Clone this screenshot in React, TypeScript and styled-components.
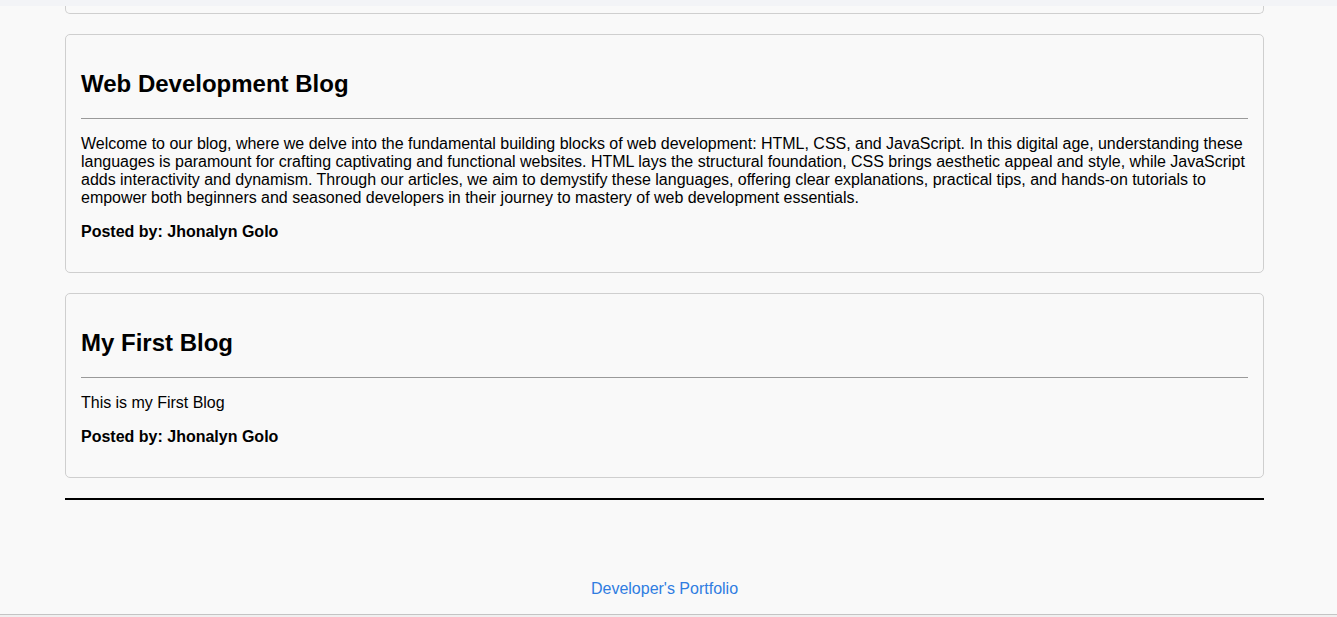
import React from "react";
import styled, { createGlobalStyle } from "styled-components";

const GlobalStyle = createGlobalStyle`
  html, body {
    margin: 0;
    padding: 0;
    background: #f9f9f9;
    font-family: "Liberation Sans", Arial, sans-serif;
    color: #000;
  }
`;

const TopBar = styled.div`
  height: 6px;
  background: #f3f4f7;
`;

const Page = styled.main`
  padding: 0 73px 0 65px;
  display: flow-root;
`;

const CardTail = styled.div`
  height: 7px;
  border: 1px solid #cfcfcf;
  border-top: none;
  border-radius: 0 0 5px 5px;
  margin-bottom: 20px;
`;

const Card = styled.article`
  border: 1px solid #cfcfcf;
  border-radius: 5px;
  padding: 15px;
  margin-bottom: 20px;
  display: flow-root;
`;

const Title = styled.h2`
  font-size: 24px;
  font-weight: bold;
  margin: 19.92px 0;
`;

const Rule = styled.hr`
  border: none;
  border-top: 1px solid #9a9a9a;
  margin: 8px 0;
`;

const Text = styled.p`
  font-size: 16px;
  margin: 16px -3px 16px 0;
  letter-spacing: -0.02px;
`;

const Author = styled.p`
  font-size: 16px;
  font-weight: bold;
  margin: 16px 0;
`;

const Divider = styled.hr`
  border: none;
  border-top: 2px solid #000;
  margin: 0;
`;

const Footer = styled.footer`
  padding: 80px 0 16px;
  text-align: center;
`;

const FooterLink = styled.a`
  color: #2f7de1;
  text-decoration: none;
  font-size: 16px;
`;

const BottomEdge = styled.div`
  border-top: 1px solid #c4c4c4;
  height: 2px;
  background: #f0f0f0;
`;

const posts = [
  {
    title: "Web Development Blog",
    body:
      "Welcome to our blog, where we delve into the fundamental building blocks of web development: HTML, CSS, and JavaScript. In this digital age, understanding these languages is paramount for crafting captivating and functional websites. HTML lays the structural foundation, CSS brings aesthetic appeal and style, while JavaScript adds interactivity and dynamism. Through our articles, we aim to demystify these languages, offering clear explanations, practical tips, and hands-on tutorials to empower both beginners and seasoned developers in their journey to mastery of web development essentials.",
    author: "Jhonalyn Golo",
  },
  {
    title: "My First Blog",
    body: "This is my First Blog",
    author: "Jhonalyn Golo",
  },
];

export default function App() {
  return (
    <>
      <GlobalStyle />
      <TopBar />
      <Page>
        <CardTail />
        {posts.map((p) => (
          <Card key={p.title}>
            <Title>{p.title}</Title>
            <Rule />
            <Text>{p.body}</Text>
            <Author>Posted by: {p.author}</Author>
          </Card>
        ))}
        <Divider />
        <Footer>
          <FooterLink href="#">Developer's Portfolio</FooterLink>
        </Footer>
      </Page>
      <BottomEdge />
    </>
  );
}
